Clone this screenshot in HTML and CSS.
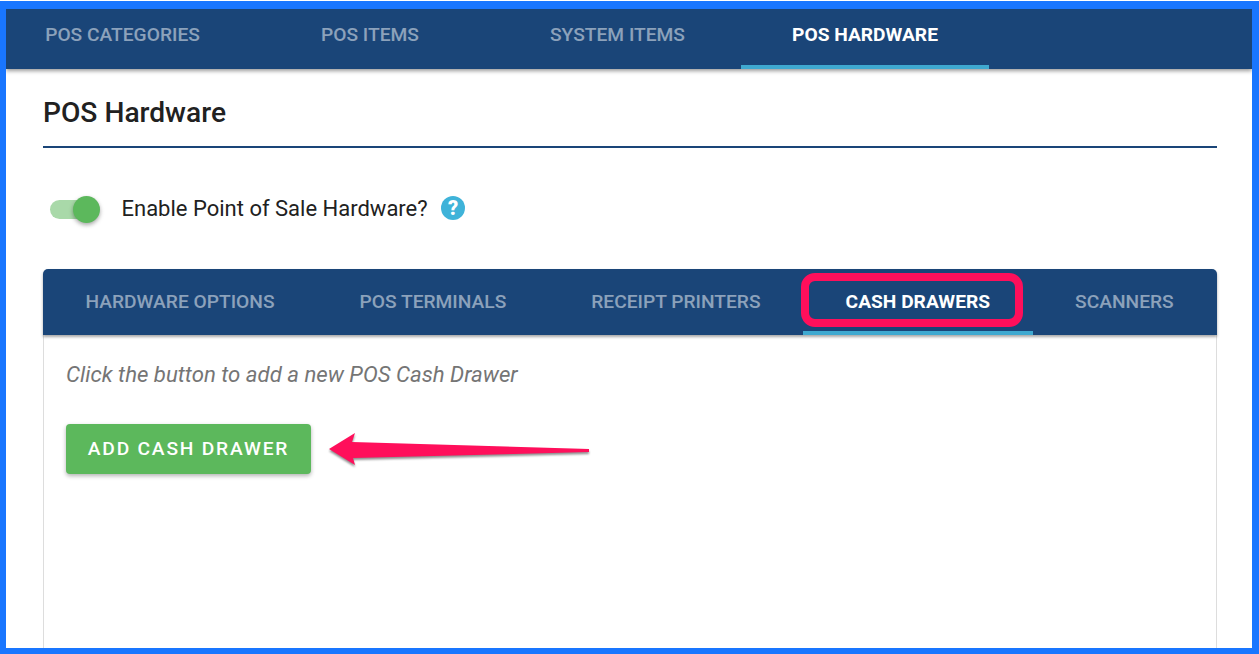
FILE: index.html
```html
<!DOCTYPE html>
<html lang="en">
<head>
    <meta charset="UTF-8">
    <title>POS Hardware</title>
    <link rel="stylesheet" href="styles.css">
</head>
<body>
    <div class="frame">
        <ul class="top-tabs">
            <li><a>POS CATEGORIES</a></li>
            <li><a>POS ITEMS</a></li>
            <li><a>SYSTEM ITEMS</a></li>
            <li><a class="active">POS HARDWARE</a></li>
        </ul>

        <div class="content">
            <h1 class="page-title">POS Hardware</h1>

            <div class="enable-row">
                <span class="switch"><span class="switch-thumb"></span></span>
                <span class="enable-label">Enable Point of Sale Hardware?</span>
                <span class="help-icon">?</span>
            </div>

            <ul class="sub-tabs">
                <li><a>HARDWARE OPTIONS</a></li>
                <li><a>POS TERMINALS</a></li>
                <li><a>RECEIPT PRINTERS</a></li>
                <li><a class="active">CASH DRAWERS</a></li>
                <li><a>SCANNERS</a></li>
            </ul>

            <div class="panel">
                <p class="hint">Click the button to add a new POS Cash Drawer</p>
                <button class="add-btn">ADD CASH DRAWER</button>
            </div>
        </div>

        <!-- annotations drawn on top of the screenshot -->
        <div class="callout-box"></div>
        <svg class="callout-arrow" width="270" height="40" viewBox="0 0 270 40">
            <polygon points="0,16 26,0 23,9 260,16 260,19 24,25 26,32" fill="#ff0f5b"/>
        </svg>
    </div>
</body>
</html>
```

FILE: styles.css
```css
* {
    box-sizing: border-box;
}

html, body {
    height: 100%;
    margin: 0;
    overflow: hidden;
    background-color: #ffffff;
}

body {
    padding-top: 1px;
    font-family: Roboto, "Liberation Sans", sans-serif;
}

.frame {
    position: relative;
    display: flex;
    flex-direction: column;
    height: 653px;
    border-style: solid;
    border-color: #1976ff;
    border-width: 8px 7px 6px 6px;
    overflow: hidden;
}

ul {
    list-style: none;
    margin: 0;
    padding: 0;
}

.top-tabs {
    display: flex;
    flex: none;
    height: 60px;
    background-color: #1a4578;
    box-shadow: 0 2px 4px rgba(0, 0, 0, 0.4);
    position: relative;
}

.top-tabs li {
    flex: none;
    width: 247.5px;
}

.top-tabs li:first-child {
    width: 240.25px;
}

.top-tabs a {
    display: flex;
    align-items: center;
    justify-content: center;
    height: 100%;
    padding-bottom: 9px;
    font-size: 19.2px;
    font-weight: 500;
    color: rgba(255, 255, 255, 0.5);
}

.top-tabs li:first-child a {
    margin-left: -7.25px;
}

.top-tabs a.active,
.sub-tabs a.active {
    color: #ffffff;
    font-weight: 700;
    border-bottom: 4px solid #3fa9d0;
}

.top-tabs a.active {
    padding-bottom: 5px;
}

.content {
    display: flex;
    flex: 1;
    flex-direction: column;
    min-height: 0;
    padding: 0 35px 0 37px;
}

.page-title {
    margin: 0;
    height: 79px;
    padding-top: 28px;
    border-bottom: 2px solid #1a4578;
    font-size: 28.16px;
    line-height: 32px;
    font-weight: 500;
    color: #212121;
}

.enable-row {
    display: flex;
    align-items: center;
    height: 121px;
}

.switch {
    position: relative;
    width: 48px;
    height: 19px;
    margin-top: 2px;
    margin-left: 7px;
    border-radius: 10px;
    background-color: #a9d9a9;
}

.switch-thumb {
    position: absolute;
    top: -4px;
    right: -1.5px;
    width: 27px;
    height: 27px;
    border-radius: 50%;
    background-color: #5cb85c;
    box-shadow: 0 2px 4px rgba(0, 0, 0, 0.35);
}

.enable-label {
    margin-left: 23.5px;
    font-size: 22px;
    color: #212121;
}

.help-icon {
    width: 24px;
    height: 24px;
    margin-top: -1px;
    margin-left: 13.5px;
    border-radius: 50%;
    background-color: #3fb3d9;
    color: #ffffff;
    font-size: 20px;
    font-weight: 900;
    line-height: 24px;
    text-align: center;
}

.sub-tabs {
    display: flex;
    flex: none;
    height: 66px;
    border-radius: 5px 5px 0 0;
    background-color: #1a4578;
    box-shadow: 0 2px 3px rgba(0, 0, 0, 0.35);
    position: relative;
}

.sub-tabs a {
    display: flex;
    align-items: center;
    height: 100%;
    padding: 0 42.5px 2px;
    font-size: 19.2px;
    font-weight: 500;
    color: rgba(255, 255, 255, 0.5);
}

.sub-tabs a.active {
    padding-top: 2px;
    padding-bottom: 0;
}

.panel {
    flex: 1;
    padding: 26px 22px 0;
    border-left: 1px solid #dddddd;
    border-right: 1px solid #dddddd;
}

.hint {
    margin: 0;
    font-size: 22.2px;
    line-height: 26px;
    font-style: italic;
    color: #757575;
}

.add-btn {
    display: block;
    width: 245px;
    height: 50px;
    margin-top: 37px;
    padding: 0 0 2px;
    border: none;
    border-radius: 4px;
    background-color: #5cb85c;
    box-shadow: 0 2px 4px rgba(0, 0, 0, 0.3);
    font-family: inherit;
    font-size: 19.2px;
    font-weight: 500;
    letter-spacing: 1.8px;
    color: #ffffff;
}

.callout-box {
    position: absolute;
    top: 264px;
    left: 795px;
    width: 222px;
    height: 54px;
    border: 8px solid #ff0f5b;
    border-radius: 14px;
}

.callout-arrow {
    position: absolute;
    top: 424px;
    left: 323px;
    filter: drop-shadow(0 2px 1px rgba(0, 0, 0, 0.45));
}
```
